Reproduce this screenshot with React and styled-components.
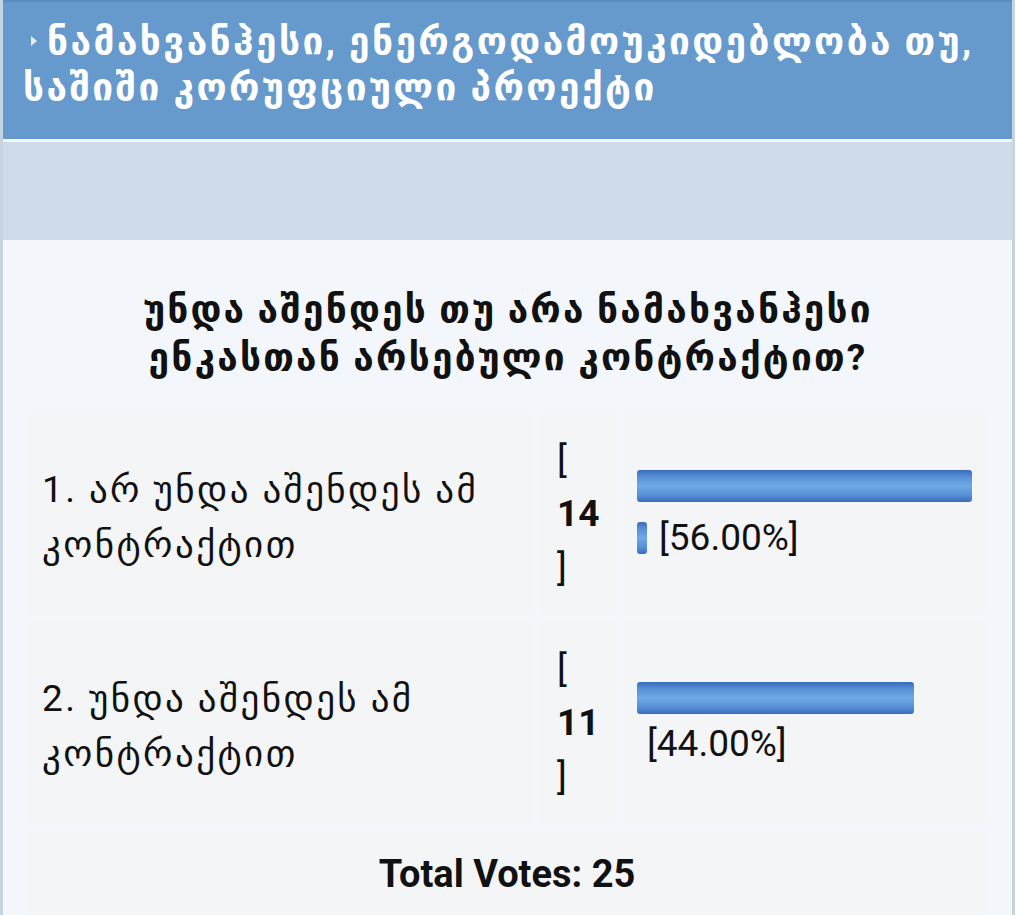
import React from 'react';
import styled, { createGlobalStyle } from 'styled-components';

const GlobalStyle = createGlobalStyle`
  html, body {
    margin: 0;
    padding: 0;
    background: #ffffff;
  }
  body {
    font-family: Roboto, "DejaVu Sans", "Noto Sans", sans-serif;
    color: #111;
  }
`;

const Panel = styled.div`
  width: 1009px;
  min-height: 915px;
  border-left: 3px solid #c6d3e1;
  border-right: 3px solid #c6d3e1;
  background: #f3f7fb;
  display: flex;
  flex-direction: column;
`;

const Header = styled.div`
  background: #6699cc;
  border-top: 2px solid #5c8cc0;
  border-bottom: 3px solid #f4f8fc;
  height: 120px;
  padding: 17px 20px 0 20px;
  color: #fff;
  font-weight: bold;
  font-size: 37px;
  line-height: 46px;
  letter-spacing: 2.45px;
`;

// small white triangle before the title
const Arrow = styled.span`
  display: inline-block;
  width: 0;
  height: 0;
  margin: 0 10px 0 8px;
  border-left: 6px solid #e9eff7;
  border-top: 5px solid transparent;
  border-bottom: 5px solid transparent;
  vertical-align: 8px;
`;

const Band = styled.div`
  height: 98px;
  background: #cfdbe8;
`;

const Body = styled.div`
  padding: 46px 24px 0 25px;
`;

const Question = styled.h2`
  margin: 0 0 31px;
  text-align: center;
  font-size: 37px;
  line-height: 48px;
  letter-spacing: 2.2px;
  font-weight: bold;
`;

const Grid = styled.div`
  display: grid;
  grid-template-columns: 505px 75px 362px;
  column-gap: 8px;
  row-gap: 8px;
`;

const Cell = styled.div`
  background: #f4f5f6;
  height: 201px;
  display: flex;
  flex-direction: column;
  justify-content: center;
  box-sizing: border-box;
  padding: ${(p) => p.$pad || '6px 14px 0'};
`;

const Option = styled.div`
  font-size: 37px;
  line-height: 55px;
  letter-spacing: 2.4px;
`;

const Count = styled.div`
  font-size: 37px;
  line-height: 54px;
`;

const BarBlock = styled.div`
  display: flex;
  flex-direction: column;
  gap: ${(p) => p.$gap}px;
`;

const BarLine = styled.div`
  display: flex;
  align-items: center;
  gap: 12px;
  padding-left: ${(p) => p.$indent || 0}px;
`;

const Bar = styled.div`
  height: 32px;
  border-radius: 3px;
  background: linear-gradient(
    to bottom,
    #3a6cbd 0%,
    #5790d6 22%,
    #6eaae4 50%,
    #5790d6 78%,
    #3a6cbd 100%
  );
`;

const Percent = styled.span`
  font-size: 37px;
  line-height: 40px;
`;

const Total = styled.div`
  grid-column: 1 / -1;
  background: #f4f5f6;
  height: 86px;
  display: flex;
  justify-content: center;
  align-items: center;
  font-weight: bold;
  font-size: 38px;
`;

const options = [
  {
    label: '1. არ უნდა აშენდეს ამ კონტრაქტით',
    votes: 14,
    pct: '56.00',
    bar: 335,
    wrap: true,
  },
  {
    label: '2. უნდა აშენდეს ამ კონტრაქტით',
    votes: 11,
    pct: '44.00',
    bar: 277,
    wrap: false,
  },
];

export default function App() {
  return (
    <>
      <GlobalStyle />
      <Panel>
        <Header>
          <Arrow />
          ნამახვანჰესი, ენერგოდამოუკიდებლობა თუ, საშიში კორუფციული პროექტი
        </Header>
        <Band />
        <Body>
          <Question>
            უნდა აშენდეს თუ არა ნამახვანჰესი
            <br />
            ენკასთან არსებული კონტრაქტით?
          </Question>
          <Grid>
            {options.map((o) => (
              <React.Fragment key={o.votes}>
                <Cell>
                  <Option>{o.label}</Option>
                </Cell>
                <Cell $pad="0 16px">
                  <Count>
                    [<br />
                    <b>{o.votes}</b>
                    <br />]
                  </Count>
                </Cell>
                <Cell $pad="0 13px">
                  {o.wrap ? (
                    <BarBlock $gap={16}>
                      <Bar style={{ width: o.bar }} />
                      <BarLine>
                        <Bar style={{ width: 10 }} />
                        <Percent>[{o.pct}%]</Percent>
                      </BarLine>
                    </BarBlock>
                  ) : (
                    <BarBlock $gap={10}>
                      <Bar style={{ width: o.bar }} />
                      <BarLine $indent={10}>
                        <Percent>[{o.pct}%]</Percent>
                      </BarLine>
                    </BarBlock>
                  )}
                </Cell>
              </React.Fragment>
            ))}
            <Total>Total Votes: 25</Total>
          </Grid>
        </Body>
      </Panel>
    </>
  );
}
